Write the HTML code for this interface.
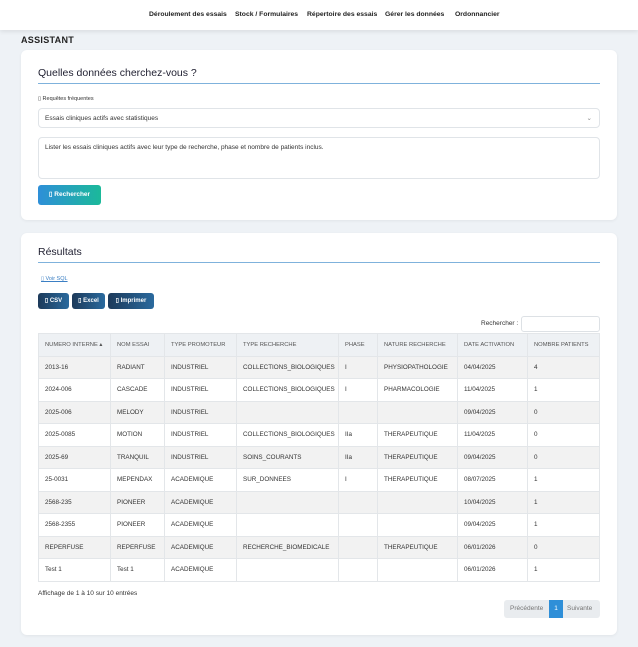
<!DOCTYPE html>
<html><head><meta charset="utf-8"><style>
*{box-sizing:border-box;margin:0;padding:0}
body{width:638px;height:647px;background:#eef2f6;font-family:"Liberation Sans",sans-serif;color:#333;position:relative;overflow:hidden}
.nav{position:absolute;left:0;top:0;width:638px;height:30px;background:#fff;box-shadow:0 2px 4px rgba(0,0,0,.08);font-size:6.8px;font-weight:bold;color:#222}
.nav span{position:absolute;top:11px}
.t{position:absolute;font-size:9px;font-weight:bold;left:21px;top:35px;letter-spacing:.3px;color:#222}
.card{position:absolute;left:21px;width:596px;background:#fff;border-radius:6px;box-shadow:0 1px 3px rgba(0,0,0,.06)}
.h{position:absolute;left:17px;width:562px;border-bottom:1px solid #7fb2dc;font-size:10.5px;color:#223}
.inp{position:absolute;left:17px;width:562px;border:1px solid #e0e4e8;border-radius:4px;font-size:6.5px;padding-left:6px;color:#333}
.btn{position:absolute;color:#fff;font-size:6px;font-weight:bold;border-radius:3px;text-align:center}
table{position:absolute;left:17px;top:100px;width:562px;border-collapse:collapse;font-size:6.3px}
td,th{border:1px solid #e3e6e9;height:22.5px;padding-left:6px;text-align:left;font-weight:normal;white-space:nowrap}
th{background:#eef1f4;font-size:5.8px;color:#555}
tr:nth-child(even) td{background:#f2f2f2}
</style></head><body>
<div class="nav"><span style="left:149px">Déroulement des essais</span><span style="left:235px">Stock / Formulaires</span><span style="left:307px">Répertoire des essais</span><span style="left:385px">Gérer les données</span><span style="left:455px">Ordonnancier</span></div>
<div class="t">ASSISTANT</div>
<div class="card" style="top:50px;height:170px">
<div class="h" style="top:17px;height:17px">Quelles données cherchez-vous ?</div>
<div style="position:absolute;left:17px;top:46px;font-size:5.5px">▯ Requêtes fréquentes</div>
<div class="inp" style="top:58px;height:20px;line-height:19px">Essais cliniques actifs avec statistiques<span style="position:absolute;right:7px;color:#888">⌄</span></div>
<div class="inp" style="top:87px;height:42px;padding-top:6px">Lister les essais cliniques actifs avec leur type de recherche, phase et nombre de patients inclus.</div>
<div class="btn" style="left:17px;top:135px;width:63px;height:20px;line-height:20px;background:linear-gradient(90deg,#2e8fd8,#1bb99a);font-size:6.5px">▯ Rechercher</div>
</div>
<div class="card" style="top:233px;height:402px">
<div class="h" style="top:13px;height:17px">Résultats</div>
<div style="position:absolute;left:20px;top:43px;font-size:5.5px;color:#3b7fc4;text-decoration:underline">▯ Voir SQL</div>
<div class="btn" style="left:17px;top:60px;width:31px;height:16px;line-height:16px;background:linear-gradient(90deg,#1d3a5a,#2a6a9e)">▯ CSV</div>
<div class="btn" style="left:51px;top:60px;width:33px;height:16px;line-height:16px;background:linear-gradient(90deg,#1d3a5a,#2a6a9e)">▯ Excel</div>
<div class="btn" style="left:87px;top:60px;width:46px;height:16px;line-height:16px;background:linear-gradient(90deg,#1d3a5a,#2a6a9e)">▯ Imprimer</div>
<div style="position:absolute;left:460px;top:87px;font-size:6.5px">Rechercher :</div>
<div style="position:absolute;left:500px;top:83px;width:79px;height:16px;border:1px solid #dde1e5;border-radius:3px"></div>
<table>
<tr><th style="width:72px">NUMERO INTERNE ▴</th><th style="width:54px">NOM ESSAI</th><th style="width:72px">TYPE PROMOTEUR</th><th style="width:102px">TYPE RECHERCHE</th><th style="width:39px">PHASE</th><th style="width:80px">NATURE RECHERCHE</th><th style="width:70px">DATE ACTIVATION</th><th>NOMBRE PATIENTS</th></tr>
<tr><td>2013-16</td><td>RADIANT</td><td>INDUSTRIEL</td><td>COLLECTIONS_BIOLOGIQUES</td><td>I</td><td>PHYSIOPATHOLOGIE</td><td>04/04/2025</td><td>4</td></tr>
<tr><td>2024-006</td><td>CASCADE</td><td>INDUSTRIEL</td><td>COLLECTIONS_BIOLOGIQUES</td><td>I</td><td>PHARMACOLOGIE</td><td>11/04/2025</td><td>1</td></tr>
<tr><td>2025-006</td><td>MELODY</td><td>INDUSTRIEL</td><td></td><td></td><td></td><td>09/04/2025</td><td>0</td></tr>
<tr><td>2025-0085</td><td>MOTION</td><td>INDUSTRIEL</td><td>COLLECTIONS_BIOLOGIQUES</td><td>IIa</td><td>THERAPEUTIQUE</td><td>11/04/2025</td><td>0</td></tr>
<tr><td>2025-69</td><td>TRANQUIL</td><td>INDUSTRIEL</td><td>SOINS_COURANTS</td><td>IIa</td><td>THERAPEUTIQUE</td><td>09/04/2025</td><td>0</td></tr>
<tr><td>25-0031</td><td>MEPENDAX</td><td>ACADEMIQUE</td><td>SUR_DONNEES</td><td>I</td><td>THERAPEUTIQUE</td><td>08/07/2025</td><td>1</td></tr>
<tr><td>2568-235</td><td>PIONEER</td><td>ACADEMIQUE</td><td></td><td></td><td></td><td>10/04/2025</td><td>1</td></tr>
<tr><td>2568-2355</td><td>PIONEER</td><td>ACADEMIQUE</td><td></td><td></td><td></td><td>09/04/2025</td><td>1</td></tr>
<tr><td>REPERFUSE</td><td>REPERFUSE</td><td>ACADEMIQUE</td><td>RECHERCHE_BIOMEDICALE</td><td></td><td>THERAPEUTIQUE</td><td>06/01/2026</td><td>0</td></tr>
<tr><td>Test 1</td><td>Test 1</td><td>ACADEMIQUE</td><td></td><td></td><td></td><td>06/01/2026</td><td>1</td></tr>
</table>
<div style="position:absolute;left:17px;top:357px;font-size:6.5px">Affichage de 1 à 10 sur 10 entrées</div>
<div style="position:absolute;left:483px;top:367px;width:96px;height:18px;background:#e9ecef;border-radius:3px;font-size:6.5px;color:#777;line-height:18px">
<span style="position:absolute;left:6px">Précédente</span>
<span style="position:absolute;left:45px;width:14px;height:18px;background:#2f8fd8;color:#fff;text-align:center">1</span>
<span style="position:absolute;left:63px">Suivante</span></div>
</div>
</body></html>
